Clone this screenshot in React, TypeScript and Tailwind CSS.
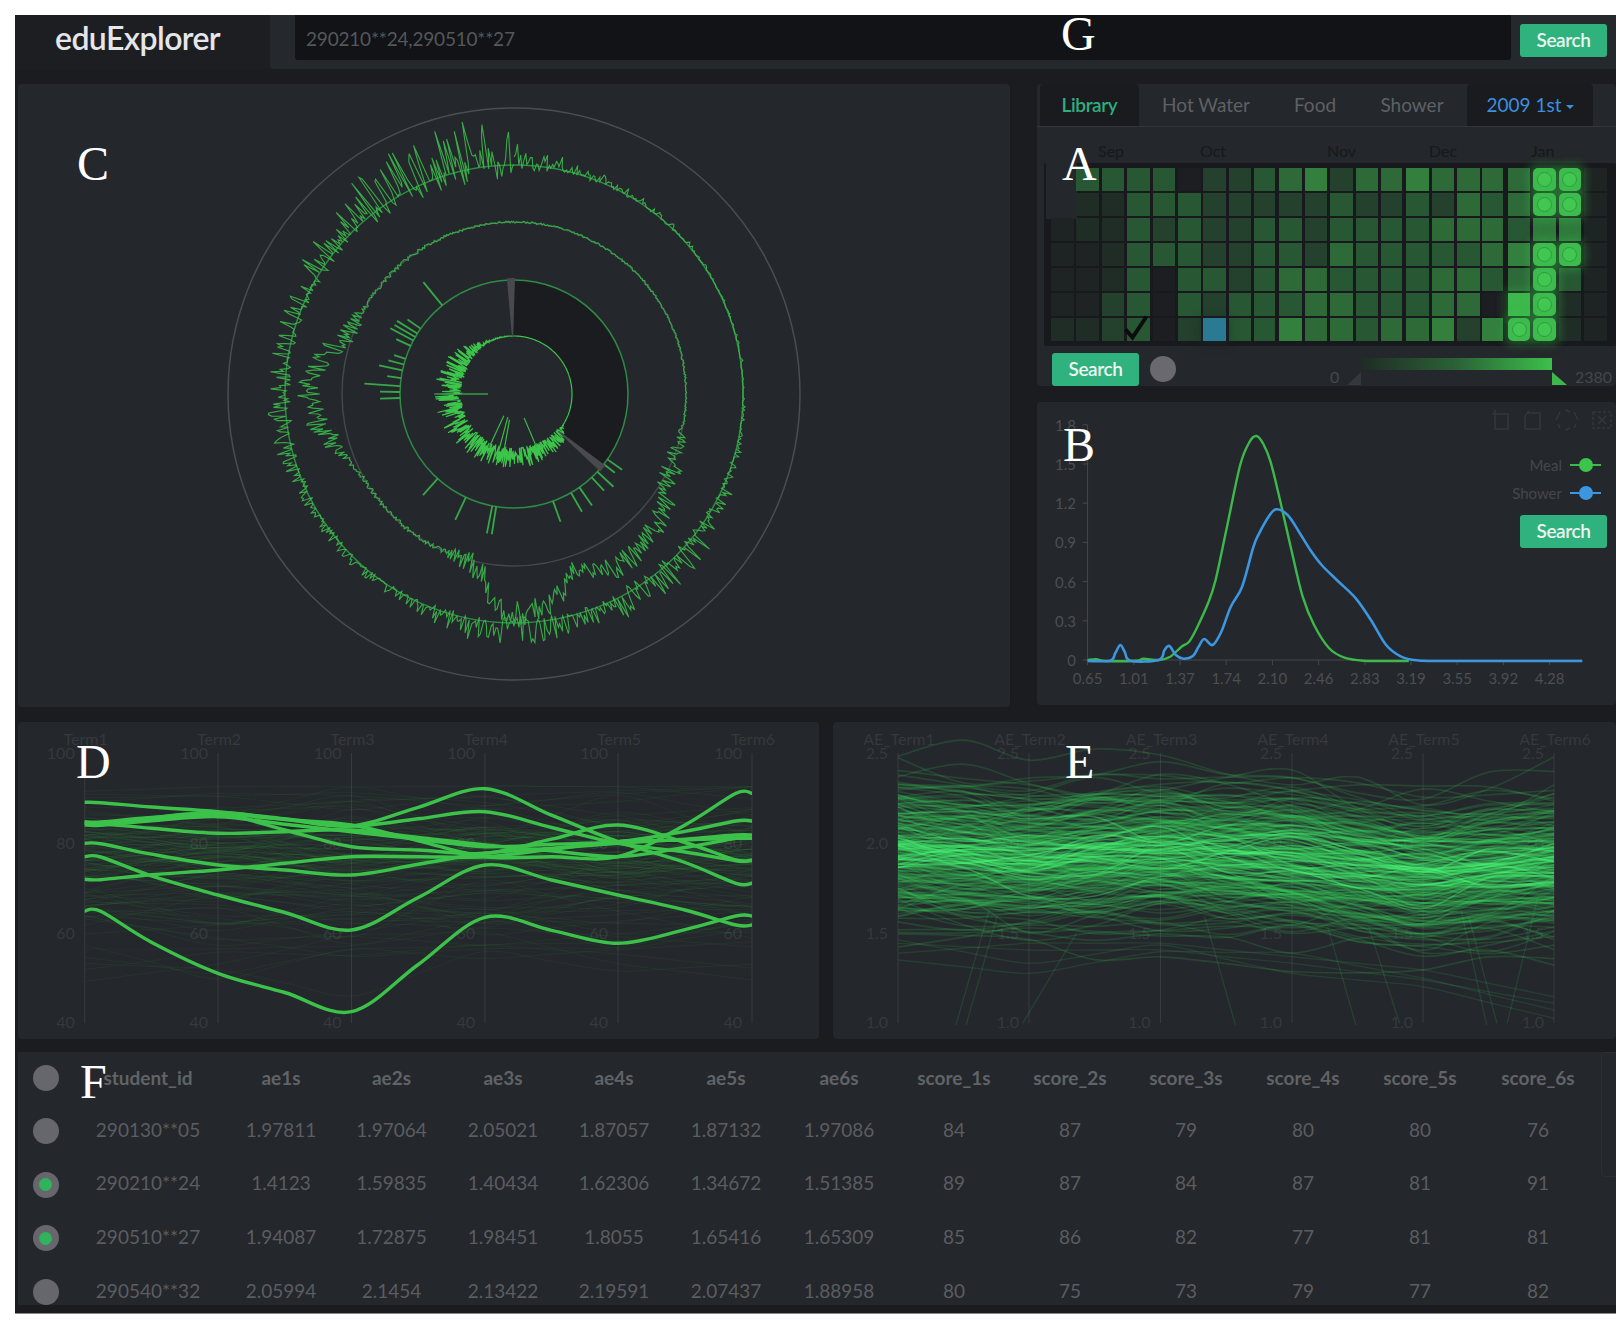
import React from "react";

type Pt = [number, number];

function rng(seed: number) {
  let a = seed;
  return () => {
    a |= 0;
    a = (a + 0x6d2b79f5) | 0;
    let t = Math.imul(a ^ (a >>> 15), 1 | a);
    t = (t + Math.imul(t ^ (t >>> 7), 61 | t)) ^ t;
    return ((t ^ (t >>> 14)) >>> 0) / 4294967296;
  };
}

function gauss(r: () => number) {
  return r() + r() + r() + r() + r() + r() - 3;
}

// catmull-rom through the points
function smooth(p: Pt[]) {
  let d = `M${p[0][0].toFixed(1)} ${p[0][1].toFixed(1)}`;
  for (let i = 0; i < p.length - 1; i++) {
    const a = p[Math.max(i - 1, 0)];
    const b = p[i];
    const c = p[i + 1];
    const e = p[Math.min(i + 2, p.length - 1)];
    const c1x = b[0] + (c[0] - a[0]) / 6;
    const c1y = b[1] + (c[1] - a[1]) / 6;
    const c2x = c[0] - (e[0] - b[0]) / 6;
    const c2y = c[1] - (e[1] - b[1]) / 6;
    d += `C${c1x.toFixed(1)} ${c1y.toFixed(1)} ${c2x.toFixed(1)} ${c2y.toFixed(1)} ${c[0].toFixed(1)} ${c[1].toFixed(1)}`;
  }
  return d;
}

function lerpTable(t: number[][], x: number) {
  for (let i = 0; i < t.length - 1; i++) {
    if (x >= t[i][0] && x <= t[i + 1][0]) {
      const k = (x - t[i][0]) / (t[i + 1][0] - t[i][0] || 1);
      return t[i][1] + (t[i + 1][1] - t[i][1]) * k;
    }
  }
  return 0;
}

const CX = 514;
const CY = 394;

function polar(r: number, deg: number): Pt {
  const a = (deg * Math.PI) / 180;
  return [CX + r * Math.sin(a), CY - r * Math.cos(a)];
}

function ringPath(fn: (deg: number, r: () => number) => number, seed: number, step = 0.5) {
  const r = rng(seed);
  let d = "";
  for (let deg = 0; deg <= 360; deg += step) {
    const p = polar(fn(deg, r), deg);
    d += `${d ? "L" : "M"}${p[0].toFixed(1)} ${p[1].toFixed(1)}`;
  }
  return d;
}

const ring4Amp = [[0, 30], [10, 14], [25, 7], [45, 4], [60, 2], [100, 3], [115, 12], [130, 24], [150, 24], [165, 16], [180, 26], [195, 18], [210, 8], [240, 8], [262, 20], [275, 18], [290, 16], [310, 26], [330, 44], [345, 52], [353, 60], [360, 30]];
const ring3Lift = [[0, 0], [110, 0], [120, 6], [130, 20], [140, 28], [150, 28], [158, 18], [162, 12], [168, 38], [177, 48], [185, 42], [190, 8], [198, 0], [240, 0], [250, 8], [262, 28], [272, 34], [280, 22], [290, 5], [300, 0], [360, 0]];
const ring3Noise = [[0, 1], [100, 1], [112, 12], [195, 12], [205, 2], [248, 2], [255, 12], [290, 12], [300, 2], [360, 1]];
const ring1Amp = [[0, 0], [122, 0], [128, 8], [135, 16], [180, 20], [230, 22], [270, 26], [295, 24], [318, 12], [330, 2], [360, 0]];

const ring4 = ringPath((deg, r) => {
  const a = lerpTable(ring4Amp, deg);
  const u = r();
  return 229 + (r() > 0.72 ? -0.28 * u * a : u * u * a);
}, 11, 0.4);
const ring3 = ringPath((deg, r) => 172 + lerpTable(ring3Lift, deg) + (r() - 0.5) * 2 * lerpTable(ring3Noise, deg), 23, 0.45);
const ring1 = ringPath((deg, r) => {
  const a = lerpTable(ring1Amp, deg);
  const u = r();
  return 58 + (u * u * 1.05 - 0.2) * a;
}, 37, 0.4);

const ring2Spikes: Pt[] = [[125, 18], [128, 14], [133, 22], [137, 18], [145, 22], [150, 22], [160, 22], [189, 28], [191, 28], [205, 25], [222, 22], [268, 20], [271, 20], [274, 36], [278, 14], [282, 24], [285, 16], [288, 12], [295, 16], [298, 26], [300, 24], [302, 24], [305, 16], [321, 30]];
const innerSpikes: Pt[] = [[270, 26], [205, 24], [195, 24], [190, 26], [157, 26]];

function arcSector(r0: number, r1: number, a0: number, a1: number) {
  const p0 = polar(r1, a0);
  const p1 = polar(r1, a1);
  const p2 = polar(r0, a1);
  const p3 = polar(r0, a0);
  return `M${p0[0]} ${p0[1]}A${r1} ${r1} 0 0 1 ${p1[0]} ${p1[1]}L${p2[0]} ${p2[1]}A${r0} ${r0} 0 0 0 ${p3[0]} ${p3[1]}Z`;
}

function wedge(deg: number) {
  const a = polar(58, deg - 0.6);
  const b = polar(58, deg + 0.6);
  const c = polar(116, deg + 2);
  const d = polar(116, deg - 2);
  return `${a.join(",")} ${b.join(",")} ${c.join(",")} ${d.join(",")}`;
}

function RadialChart() {
  return (
    <svg viewBox="18 84 992 623" className="block h-full w-full">
      <circle cx={CX} cy={CY} r={286} fill="none" stroke="#4b4d51" strokeWidth={1.5} />
      <path d={arcSector(58, 114, 0, 130)} fill="#1b1c1f" />
      <circle cx={CX} cy={CY} r={172} fill="none" stroke="#44474b" strokeWidth={1.5} />
      <circle cx={CX} cy={CY} r={229} fill="none" stroke="#2f8a46" strokeWidth={1.5} />
      <circle cx={CX} cy={CY} r={114} fill="none" stroke="#2f8a46" strokeWidth={1.5} />
      <path d={ring4} fill="none" stroke="#3cb94a" strokeWidth={1.1} opacity={0.9} />
      <path d={ring3} fill="none" stroke="#37a848" strokeWidth={1.2} />
      {ring2Spikes.map(([deg, len], i) => {
        const a = polar(114, deg);
        const b = polar(114 + len, deg);
        return <line key={i} x1={a[0]} y1={a[1]} x2={b[0]} y2={b[1]} stroke="#37a848" strokeWidth={1.8} />;
      })}
      <path d={ring1} fill="none" stroke="#3cc54a" strokeWidth={1.2} />
      {innerSpikes.map(([deg, r], i) => {
        const a = polar(58, deg);
        const b = polar(r, deg);
        return <line key={i} x1={a[0]} y1={a[1]} x2={b[0]} y2={b[1]} stroke="#3cb94a" strokeWidth={1.2} />;
      })}
      <polygon points={wedge(-1.5)} fill="#4a4a4e" />
      <polygon points={wedge(130)} fill="#4a4a4e" />
    </svg>
  );
}

const heatRows = [
  "_3333x2234524454444GG0",
  "_113332222232232434GG0",
  "0113232233233334443dd0",
  "0013332233243333345GG0",
  "0013x33234433334434G30",
  "0023x323334433344xgG10",
  "1123x2B33544344525GG10",
];

const heatColors: Record<string, string> = {
  x: "bg-[#1c1e22]",
  "0": "bg-[#1e2423]",
  "1": "bg-[#1f2d26]",
  "2": "bg-[#24412d]",
  "3": "bg-[#285733]",
  "4": "bg-[#2d6a38]",
  "5": "bg-[#33803e]",
  d: "bg-[#2f7a3c]",
  B: "bg-[#2b7a94] shadow-[0_2px_8px_2px_rgba(30,40,45,0.6)] z-10",
  g: "bg-[#3db84c] shadow-[0_0_10px_4px_rgba(60,200,80,0.28)] z-10",
};

function HeatCell({ v, r, c }: { v: string; r: number; c: number }) {
  const boundary = c === 8 || c === 13 || c === 17 ? "mr-[2px]" : "";
  if (v === "_") {
    return <div className={r === 0 ? "-mt-[5px] -mb-[3px] -ml-[5px] -mr-[3px] bg-[#24272b]" : "-mt-[3px] -mb-[3px] -ml-[5px] -mr-[3px] bg-[#24272b]"} />;
  }
  if (v === "G") {
    return (
      <div className="relative z-10 flex items-center justify-center rounded-[5px] bg-[#3dbb4c] shadow-[0_0_9px_5px_rgba(60,200,80,0.3)]">
        <div className="h-[15px] w-[15px] rounded-full border border-[#2f9a42] bg-[#42c751]" />
      </div>
    );
  }
  return <div className={`relative ${boundary} ${heatColors[v]}`} />;
}

function SearchButton({ className = "" }: { className?: string }) {
  return (
    <button className={`flex h-[33px] w-[87px] items-center justify-center rounded-[3px] bg-[#2fb27d] text-[19px] font-semibold tracking-[-0.4px] text-[#eef5f1] ${className}`}>
      Search
    </button>
  );
}

function CalendarPanel() {
  return (
    <section className="relative h-[302px] rounded-[4px] bg-[#24272b]">
      <div className="flex h-[43px] items-stretch border-b border-[#33353a] pl-[3px] text-[19px] text-[#5e6165]">
        <div className="flex w-[99px] items-center justify-center rounded-t-[4px] bg-[#1a1b1e] pt-[1px] font-semibold tracking-[-0.4px] text-[#2fae80]">Library</div>
        <div className="flex w-[134px] items-center justify-center pt-[1px]">Hot Water</div>
        <div className="flex w-[84px] items-center justify-center pt-[1px]">Food</div>
        <div className="flex w-[110px] items-center justify-center pt-[1px]">Shower</div>
        <div className="flex w-[126px] items-center justify-center gap-[4px] rounded-t-[4px] bg-[#1a1b1e] pt-[1px] text-[#3d8fe0]">
          2009 1st
          <span className="mt-[2px] h-0 w-0 border-x-[4px] border-t-[4px] border-x-transparent border-t-[#3d8fe0]" />
        </div>
      </div>
      <div className="relative h-[36px] text-[16px] text-[#17191c]">
        <span className="absolute left-[61px] top-[12px]">Sep</span>
        <span className="absolute left-[163px] top-[12px]">Oct</span>
        <span className="absolute left-[290px] top-[12px]">Nov</span>
        <span className="absolute left-[392px] top-[12px]">Dec</span>
        <span className="absolute left-[494px] top-[12px]">Jan</span>
      </div>
      <div className="relative ml-[7px] w-[572px] rounded-[2px] bg-[#17191c] py-[5px] pl-[7px]">
        <div className="grid grid-cols-[repeat(22,22.7px)] grid-rows-[repeat(7,22.5px)] gap-x-[2.7px] gap-y-[2.5px]">
          {heatRows.map((row, r) =>
            row.split("").map((v, c) => <HeatCell key={`${r}-${c}`} v={v} r={r} c={c} />)
          )}
        </div>
        <svg viewBox="0 0 24 24" className="absolute left-[78px] top-[150px] z-20 h-[28px] w-[28px]">
          <path d="M3 14 L9 21 L21 3" fill="none" stroke="#0b0c0d" strokeWidth={3.4} />
        </svg>
      </div>
      <div className="mt-[7px] flex items-start pl-[15px]">
        <SearchButton />
        <div className="ml-[11px] mt-[3px] h-[26px] w-[26px] rounded-full bg-[#6b6970]" />
        <svg viewBox="1325 353 291 33" className="ml-auto block h-[33px] w-[291px]">
          <defs>
            <linearGradient id="heatScale" x1="0" x2="1" y1="0" y2="0">
              <stop offset="0" stopColor="#1f2c25" />
              <stop offset="0.5" stopColor="#2b6236" />
              <stop offset="1" stopColor="#3cc04b" />
            </linearGradient>
          </defs>
          <rect x={1361} y={358} width={191} height={12} fill="url(#heatScale)" />
          <polygon points="1361,372 1361,385 1347,385" fill="#34373b" />
          <polygon points="1552,372 1552,385 1567,385" fill="#3cb94a" />
          <text x={1330} y={383} fontSize={16} fill="#45484c">0</text>
          <text x={1575} y={383} fontSize={16} fill="#45484c">2380</text>
        </svg>
      </div>
    </section>
  );
}

const bx = (X: number) => 1030 + X / 2.64;
const by = (Y: number) => 390 + Y / 3;
const greenPts: Pt[] = ([[152, 810], [175, 808], [200, 813], [280, 812], [300, 806], [340, 810], [370, 800], [400, 770], [420, 755], [440, 715], [470, 640], [490, 570], [520, 410], [555, 225], [580, 155], [598, 138], [615, 160], [635, 215], [660, 330], [690, 480], [720, 620], [750, 705], [790, 775], [830, 803], [880, 812], [1000, 813]] as Pt[]).map(([x, y]) => [bx(x), by(y)]);
const bluePts: Pt[] = ([[152, 813], [212, 812], [225, 790], [238, 765], [250, 785], [265, 812], [340, 810], [355, 780], [368, 768], [385, 795], [405, 806], [430, 798], [445, 770], [460, 747], [482, 765], [505, 725], [530, 650], [560, 590], [590, 470], [605, 430], [630, 380], [650, 358], [680, 375], [710, 425], [740, 480], [770, 525], [810, 570], [860, 625], [900, 690], [940, 765], [980, 800], [1020, 811], [1100, 813], [1458, 813]] as Pt[]).map(([x, y]) => [bx(x), by(y)]);

const xTicks = ["0.65", "1.01", "1.37", "1.74", "2.10", "2.46", "2.83", "3.19", "3.55", "3.92", "4.28"];
const yTicks = ["0", "0.3", "0.6", "0.9", "1.2", "1.5", "1.8"];

function DensityChart() {
  const x0 = 1087.6;
  const y0 = 660;
  return (
    <svg viewBox="1037 402 579 303" className="block h-full w-full">
      <line x1={x0} y1={y0} x2={1582} y2={y0} stroke="#45484c" />
      <line x1={x0} y1={y0} x2={x0} y2={425} stroke="#45484c" />
      {xTicks.map((t, i) => {
        const x = x0 + i * 46.2;
        return (
          <g key={t}>
            <line x1={x} x2={x} y1={y0} y2={y0 + 5} stroke="#45484c" />
            <text x={x} y={678} fontSize={15} fill="#4c4f53" textAnchor="middle" dominantBaseline="central">{t}</text>
          </g>
        );
      })}
      {yTicks.map((t, i) => {
        const y = y0 - i * 39.2;
        return (
          <g key={t}>
            <line x1={x0 - 5} x2={x0} y1={y} y2={y} stroke="#45484c" />
            <text x={1076} y={y} fontSize={15} fill="#4c4f53" textAnchor="end" dominantBaseline="central">{t}</text>
          </g>
        );
      })}
      <path d={smooth(greenPts)} fill="none" stroke="#3cb94a" strokeWidth={2.4} />
      <path d={smooth(bluePts)} fill="none" stroke="#3c96e0" strokeWidth={2.6} />
      <g fill="none" stroke="#34373b" strokeWidth={1.5}>
        <path d="M1492 414h16v15h-13v-19" />
        <path d="M1527 413h13v16h-15v-13M1525 416l4-5" />
        <path d="M1566 410l4 2M1578 420l-2-4M1566 430l4-2M1556 420l2-4M1558 424l2 4M1574 412l2 4M1560 412l-2 4M1574 428l2-4" />
        <rect x={1593} y={412} width={18} height={16} strokeDasharray="3 2" />
        <path d="M1598 416l8 8M1606 416l-8 8" />
      </g>
      <text x={1562} y={465} fontSize={15} fill="#45484c" textAnchor="end" dominantBaseline="central">Meal</text>
      <text x={1562} y={493} fontSize={15} fill="#45484c" textAnchor="end" dominantBaseline="central">Shower</text>
      <line x1={1570} x2={1601} y1={465} y2={465} stroke="#3cb94a" strokeWidth={2} />
      <circle cx={1586} cy={465} r={7} fill="#3cc54a" />
      <line x1={1570} x2={1601} y1={493} y2={493} stroke="#3c96e0" strokeWidth={2} />
      <circle cx={1586} cy={493} r={7} fill="#3c96e0" />
    </svg>
  );
}

function Axes({ xs, names, ticks }: { xs: number[]; names: string[]; ticks: string[] }) {
  const ys = [752, 842, 932, 1021];
  return (
    <g>
      {xs.map((x, i) => (
        <g key={names[i]}>
          <line x1={x} x2={x} y1={753} y2={1023} stroke="#383b3f" />
          <text x={x + 1} y={738} fontSize={16} fill="#36393d" textAnchor="middle" dominantBaseline="central">{names[i]}</text>
          {ticks.map((t, k) => (
            <text key={t} x={x - 10} y={ys[k]} fontSize={16} fill="#36393d" textAnchor="end" dominantBaseline="central">{t}</text>
          ))}
        </g>
      ))}
    </g>
  );
}

const dXs = [84.7, 218, 351.5, 485, 618, 752];
const dLines = [
  [340, 308, 348, 236, 395, 520],
  [277, 305, 348, 305, 400, 452],
  [340, 370, 360, 405, 440, 385],
  [335, 310, 410, 430, 345, 450],
  [400, 465, 495, 430, 400, 375],
  [508, 480, 440, 440, 395, 385],
  [440, 555, 660, 465, 555, 645],
  [603, 790, 905, 622, 700, 618],
  [345, 320, 365, 410, 395, 333],
  [338, 312, 345, 440, 440, 250],
];

function withMids(xs: number[], vals: number[]) {
  const pts: Pt[] = [];
  vals.forEach((v, i) => {
    if (i > 0) {
      pts.push([xs[i - 1] + (xs[i] - xs[i - 1]) * 0.5, (vals[i - 1] + v) / 2]);
    }
    pts.push([xs[i], v]);
  });
  return pts;
}

// bold lines leave and reach the outer axes flat
function flatEnds(xs: number[], vals: number[]) {
  const pts = withMids(xs, vals);
  pts.splice(1, 0, [xs[0] + 16, vals[0] + 1]);
  pts.splice(pts.length - 1, 0, [xs[xs.length - 1] - 16, vals[vals.length - 1]]);
  return pts;
}

const dFaint = (() => {
  const r = rng(91);
  const out: string[] = [];
  for (let i = 0; i < 130; i++) {
    const base = i < 90 ? 420 + gauss(r) * 90 : 560 + gauss(r) * 170;
    const vals = dXs.map(() => Math.max(230, base + gauss(r) * 55));
    out.push(smooth(withMids(dXs, vals).map(([x, Y]) => [x, 710 + Y / 3] as Pt)));
  }
  return out;
})();

function TermChart() {
  return (
    <svg viewBox="18 722 801 317" className="block h-full w-full">
      <Axes xs={dXs} names={["Term1", "Term2", "Term3", "Term4", "Term5", "Term6"]} ticks={["100", "80", "60", "40"]} />
      {dFaint.map((d, i) => (
        <path key={i} d={d} fill="none" stroke="#3cc54a" strokeWidth={1} opacity={0.07} />
      ))}
      {dLines.map((l, i) => (
        <path key={i} d={smooth(flatEnds(dXs, l).map(([x, Y]) => [x, 710 + Y / 3] as Pt))} fill="none" stroke="#3cc24a" strokeWidth={3.4} />
      ))}
    </svg>
  );
}

const eXs = [898, 1029, 1160.5, 1292, 1423, 1554];
const eCenter = [420, 440, 420, 440, 490, 460];

function aeLine(r: () => number, spread: number, wobble: number) {
  // lines gather in bands, which leaves the dark streaks between them
  const base = Math.round((gauss(r) * spread) / 46) * 46 + (r() - 0.5) * 10;
  const vals = eCenter.map((c) => Math.max(135, c + base + gauss(r) * wobble));
  const pts: Pt[] = [];
  vals.forEach((v, k) => {
    if (k > 0) {
      pts.push([(eXs[k - 1] + eXs[k]) / 2, (vals[k - 1] + v) / 2 + gauss(r) * 30]);
    }
    pts.push([eXs[k], v]);
  });
  return smooth(pts.map(([x, Y]) => [x, 710 + Y / 3] as Pt));
}

const eLines = (() => {
  const r = rng(57);
  return Array.from({ length: 250 }, () => aeLine(r, 150, 46));
})();

const eBright = (() => {
  const r = rng(73);
  return Array.from({ length: 26 }, () => aeLine(r, 45, 40));
})();

const eLow = [
  [700, 720, 720, 760, 810, 880],
  [750, 790, 725, 730, 805, 900],
  [690, 760, 705, 790, 830, 925],
  [730, 700, 700, 740, 780, 860],
].map((l) => smooth(withMids(eXs, l).map(([x, Y]) => [x, 710 + Y / 3] as Pt)));

const eStrays = [
  [265, 945, 330, 600], [285, 945, 345, 620], [395, 940, 500, 670], [810, 945, 750, 620],
  [1045, 945, 990, 650], [1130, 940, 1070, 650], [1300, 945, 1250, 600], [1320, 940, 1265, 620], [1340, 940, 1400, 560],
];

function AeChart() {
  return (
    <svg viewBox="833 722 783 317" className="block h-full w-full">
      <Axes xs={eXs} names={["AE_Term1", "AE_Term2", "AE_Term3", "AE_Term4", "AE_Term5", "AE_Term6"]} ticks={["2.5", "2.0", "1.5", "1.0"]} />
      <g className="blur-[0.7px]">
        {eLines.map((d, i) => (
          <path key={i} d={d} fill="none" stroke="#3fe865" strokeWidth={1.7} opacity={0.15} />
        ))}
        {eBright.map((d, i) => (
          <path key={i} d={d} fill="none" stroke="#4dff7a" strokeWidth={1.6} opacity={0.34} />
        ))}
        {eLow.map((d, i) => (
          <path key={i} d={d} fill="none" stroke="#42ff72" strokeWidth={1.4} opacity={0.1} />
        ))}
        {eStrays.map(([x1, y1, x2, y2], i) => (
          <line key={i} x1={820 + x1 / 1.95} y1={710 + y1 / 3} x2={820 + x2 / 1.95} y2={710 + y2 / 3} stroke="#42ff72" strokeWidth={1.4} opacity={0.11} />
        ))}
      </g>
    </svg>
  );
}

const tableCols = "grid-cols-[55px_150px_116px_105px_118px_104px_120px_106px_124px_108px_124px_110px_124px_112px]";
const tableHead = ["student_id", "ae1s", "ae2s", "ae3s", "ae4s", "ae5s", "ae6s", "score_1s", "score_2s", "score_3s", "score_4s", "score_5s", "score_6s"];
const tableRows = [
  { on: false, cells: ["290130**05", "1.97811", "1.97064", "2.05021", "1.87057", "1.87132", "1.97086", "84", "87", "79", "80", "80", "76"] },
  { on: true, cells: ["290210**24", "1.4123", "1.59835", "1.40434", "1.62306", "1.34672", "1.51385", "89", "87", "84", "87", "81", "91"] },
  { on: true, cells: ["290510**27", "1.94087", "1.72875", "1.98451", "1.8055", "1.65416", "1.65309", "85", "86", "82", "77", "81", "81"] },
  { on: false, cells: ["290540**32", "2.05994", "2.1454", "2.13422", "2.19591", "2.07437", "1.88958", "80", "75", "73", "79", "77", "82"] },
];

function Radio({ on }: { on: boolean }) {
  return (
    <div className="flex h-[26px] w-[26px] items-center justify-center rounded-full bg-[#68666d]">
      {on && <div className="h-[13px] w-[13px] rounded-full bg-[#2fb35c]" />}
    </div>
  );
}

function StudentTable() {
  return (
    <section className="relative ml-[3px] mt-[13px] h-[253px] overflow-hidden bg-[#24272b] pt-[1px] text-center text-[19px] text-[#5b5d62]">
      <div className="absolute right-0 top-0 h-[125px] w-[15px] rounded-l-[5px] border border-r-0 border-[#2c2f33]" />
      <div className={`grid h-[50px] items-center font-bold text-[#606367] ${tableCols}`}>
        <div className="flex justify-center">
          <Radio on={false} />
        </div>
        {tableHead.map((h) => (
          <div key={h}>{h}</div>
        ))}
      </div>
      {tableRows.map((row) => (
        <div key={row.cells[0]} className={`grid h-[53.7px] items-center ${tableCols}`}>
          <div className="mt-[2px] flex justify-center">
            <Radio on={row.on} />
          </div>
          {row.cells.map((c, i) => (
            <div key={i}>{c}</div>
          ))}
        </div>
      ))}
    </section>
  );
}

function Mark({ className, children }: { className: string; children: string }) {
  return (
    <span className={`absolute z-30 font-['Liberation_Serif',serif] text-[48px] leading-none text-white ${className}`}>{children}</span>
  );
}

export default function App() {
  return (
    <div className="relative h-[1326px] w-[1624px] bg-white font-['Lato',sans-serif]">
      <div className="ml-[15px] w-[1601px] pt-[15px]">
        <div className="h-[1299px] border-b border-[#8a8a8a] bg-[#1a1c1f]">
          <header className="flex h-[54px] bg-[#1c1e21]">
            <div className="flex w-[255px] items-center pb-[8px] pl-[40px] text-[32px] font-semibold tracking-[-0.6px] text-[#e6e6ea]">eduExplorer</div>
            <div className="flex flex-1 items-start rounded-bl-[4px] bg-[#25282c] pl-[25px]">
              <div className="flex h-[45px] w-[1216px] items-center rounded-b-[3px] bg-[#111316] pl-[11px] pt-[4px] text-[19px] tracking-[-0.2px] text-[#55575b]">290210**24,290510**27</div>
              <SearchButton className="ml-[9px] mt-[9px]" />
            </div>
          </header>

          <div className="mt-[15px] flex pl-[3px]">
            <section className="h-[623px] w-[992px] rounded-[4px] bg-[#24272b]">
              <RadialChart />
            </section>
            <div className="ml-[27px] flex-1">
              <CalendarPanel />
              <section className="relative mt-[16px] h-[303px] rounded-[4px] bg-[#24272b]">
                <DensityChart />
                <SearchButton className="absolute right-[9px] top-[113px]" />
              </section>
            </div>
          </div>

          <div className="mt-[15px] flex pl-[3px]">
            <section className="h-[317px] w-[801px] rounded-[4px] bg-[#24272b]">
              <TermChart />
            </section>
            <section className="ml-[14px] h-[317px] flex-1 rounded-[4px] bg-[#24272b]">
              <AeChart />
            </section>
          </div>

          <StudentTable />
        </div>
      </div>

      <Mark className="left-[1061px] top-[10px]">G</Mark>
      <Mark className="left-[77px] top-[140px]">C</Mark>
      <Mark className="left-[1062px] top-[140px]">A</Mark>
      <Mark className="left-[1063px] top-[421px]">B</Mark>
      <Mark className="left-[76px] top-[738px]">D</Mark>
      <Mark className="left-[1065px] top-[738px]">E</Mark>
      <Mark className="left-[80px] top-[1058px]">F</Mark>
    </div>
  );
}
